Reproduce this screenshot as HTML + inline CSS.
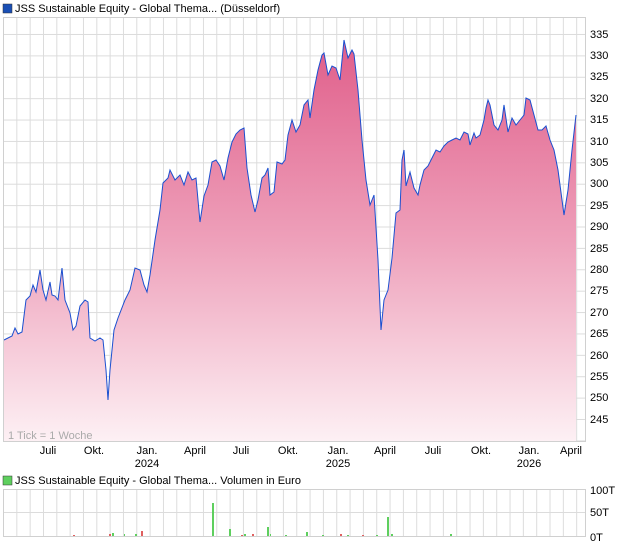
<!DOCTYPE html>
<html><head><meta charset="utf-8"><style>
body{margin:0;background:#fff;font-family:"Liberation Sans",sans-serif;}
svg text{font-family:"Liberation Sans",sans-serif;font-size:11px;fill:#000;}
</style></head><body>
<svg width="620" height="546" xmlns="http://www.w3.org/2000/svg">
<defs>
<linearGradient id="g" gradientUnits="userSpaceOnUse" x1="0" y1="40" x2="0" y2="441">
<stop offset="0" stop-color="#e05e8a"/><stop offset="0.5" stop-color="#eea0ba"/><stop offset="1" stop-color="#fdf0f4"/>
</linearGradient>
<pattern id="vg" x="3" y="0" width="13.33" height="600" patternUnits="userSpaceOnUse"><line x1="0.5" y1="0" x2="0.5" y2="600" stroke="#dcdcdc" stroke-width="1"/></pattern>
<pattern id="hg" x="0" y="12.6" width="600" height="21.39" patternUnits="userSpaceOnUse"><line x1="0" y1="0.5" x2="600" y2="0.5" stroke="#dcdcdc"/></pattern>
</defs>
<rect x="3" y="4" width="9" height="9" fill="#1a4fb5" stroke="#333" stroke-width="0.5"/>
<text x="15" y="12">JSS Sustainable Equity - Global Thema... (Düsseldorf)</text>
<rect x="3" y="17" width="582" height="424" fill="url(#vg)"/>
<rect x="3" y="17" width="582" height="424" fill="url(#hg)"/>
<path d="M4,340 L12,336 L15,328 L18,334 L22,332 L26,300 L30,296 L33,285 L36,292 L40,270 L43,290 L46,300 L50,282 L52,295 L55,296 L58,300 L62,268 L65,300 L70,313 L73,330 L76,326 L80,306 L85,300 L88,302 L90,338 L95,341 L100,338 L103,340 L106,370 L108,400 L110,370 L114,330 L118,318 L125,300 L130,290 L135,268 L140,270 L144,285 L147,292 L150,275 L155,240 L160,210 L163,183 L168,178 L170,170 L175,180 L180,175 L184,185 L188,172 L192,180 L196,178 L200,222 L204,196 L208,185 L212,162 L216,160 L220,166 L224,180 L228,158 L232,142 L236,134 L240,130 L244,128 L247,168 L251,195 L255,212 L258,200 L262,178 L265,175 L268,168 L270,195 L274,192 L277,162 L282,164 L285,160 L288,135 L292,120 L296,132 L300,125 L304,105 L308,100 L310,118 L314,90 L318,70 L322,55 L324,53 L328,75 L332,66 L336,68 L340,80 L344,40 L348,58 L352,50 L354,54 L358,90 L362,140 L366,180 L370,205 L374,195 L378,260 L381,330 L384,300 L388,290 L392,258 L396,213 L400,210 L402,160 L404,150 L406,186 L410,172 L414,188 L418,195 L420,185 L424,170 L428,166 L432,158 L436,150 L440,152 L444,146 L448,142 L452,140 L456,138 L460,140 L464,132 L468,134 L470,145 L474,133 L476,138 L480,135 L484,120 L486,108 L488,100 L490,105 L494,125 L498,130 L502,120 L504,105 L508,132 L512,118 L516,125 L520,120 L524,115 L526,98 L530,100 L534,115 L538,130 L542,130 L546,126 L550,140 L554,150 L558,170 L562,200 L564,215 L568,190 L572,150 L576,115 L576,441 L4,441 Z" fill="url(#g)"/>
<path d="M4,340 L12,336 L15,328 L18,334 L22,332 L26,300 L30,296 L33,285 L36,292 L40,270 L43,290 L46,300 L50,282 L52,295 L55,296 L58,300 L62,268 L65,300 L70,313 L73,330 L76,326 L80,306 L85,300 L88,302 L90,338 L95,341 L100,338 L103,340 L106,370 L108,400 L110,370 L114,330 L118,318 L125,300 L130,290 L135,268 L140,270 L144,285 L147,292 L150,275 L155,240 L160,210 L163,183 L168,178 L170,170 L175,180 L180,175 L184,185 L188,172 L192,180 L196,178 L200,222 L204,196 L208,185 L212,162 L216,160 L220,166 L224,180 L228,158 L232,142 L236,134 L240,130 L244,128 L247,168 L251,195 L255,212 L258,200 L262,178 L265,175 L268,168 L270,195 L274,192 L277,162 L282,164 L285,160 L288,135 L292,120 L296,132 L300,125 L304,105 L308,100 L310,118 L314,90 L318,70 L322,55 L324,53 L328,75 L332,66 L336,68 L340,80 L344,40 L348,58 L352,50 L354,54 L358,90 L362,140 L366,180 L370,205 L374,195 L378,260 L381,330 L384,300 L388,290 L392,258 L396,213 L400,210 L402,160 L404,150 L406,186 L410,172 L414,188 L418,195 L420,185 L424,170 L428,166 L432,158 L436,150 L440,152 L444,146 L448,142 L452,140 L456,138 L460,140 L464,132 L468,134 L470,145 L474,133 L476,138 L480,135 L484,120 L486,108 L488,100 L490,105 L494,125 L498,130 L502,120 L504,105 L508,132 L512,118 L516,125 L520,120 L524,115 L526,98 L530,100 L534,115 L538,130 L542,130 L546,126 L550,140 L554,150 L558,170 L562,200 L564,215 L568,190 L572,150 L576,115" fill="none" stroke="#1a4fd0" stroke-width="1"/>
<rect x="3.5" y="17.5" width="582" height="424" fill="none" stroke="#d0d0d0"/>
<text x="8" y="439" style="fill:#aaa">1 Tick = 1 Woche</text>
<g>
<text x="590" y="38">335</text><text x="590" y="59">330</text><text x="590" y="80">325</text><text x="590" y="102">320</text><text x="590" y="123">315</text><text x="590" y="145">310</text><text x="590" y="166">305</text><text x="590" y="187">300</text><text x="590" y="209">295</text><text x="590" y="230">290</text><text x="590" y="252">285</text><text x="590" y="273">280</text><text x="590" y="294">275</text><text x="590" y="316">270</text><text x="590" y="337">265</text><text x="590" y="359">260</text><text x="590" y="380">255</text><text x="590" y="401">250</text><text x="590" y="423">245</text>
</g>
<g text-anchor="middle">
<text x="48" y="454">Juli</text><text x="94" y="454">Okt.</text><text x="147" y="454">Jan.</text><text x="195" y="454">April</text><text x="241" y="454">Juli</text><text x="288" y="454">Okt.</text><text x="338" y="454">Jan.</text><text x="385" y="454">April</text><text x="433" y="454">Juli</text><text x="481" y="454">Okt.</text><text x="529" y="454">Jan.</text><text x="571" y="454">April</text>
<text x="147" y="467">2024</text><text x="338" y="467">2025</text><text x="529" y="467">2026</text>
</g>
<rect x="3" y="476" width="9" height="9" fill="#5ecf5e" stroke="#333" stroke-width="0.5"/>
<text x="15" y="484">JSS Sustainable Equity - Global Thema... Volumen in Euro</text>
<rect x="3" y="489" width="582" height="47" fill="url(#vg)"/>
<line x1="3" y1="512.5" x2="585" y2="512.5" stroke="#dcdcdc"/>
<rect x="3.5" y="489.5" width="582" height="47" fill="none" stroke="#d0d0d0"/>
<g fill="#5ecf5e">
<rect x="112" y="533" width="2" height="3"/><rect x="124" y="534" width="1" height="2"/><rect x="135" y="534" width="2" height="2"/><rect x="212" y="503" width="2" height="33"/><rect x="229" y="529" width="2" height="7"/><rect x="244" y="534" width="2" height="2"/><rect x="267" y="527" width="2" height="9"/><rect x="270" y="534" width="1" height="2"/><rect x="285" y="535" width="2" height="1"/><rect x="306" y="532" width="2" height="4"/><rect x="322" y="535" width="2" height="1"/><rect x="347" y="535" width="2" height="1"/><rect x="376" y="535" width="2" height="1"/><rect x="387" y="517" width="2" height="19"/><rect x="391" y="534" width="2" height="2"/><rect x="450" y="534" width="2" height="2"/>
</g>
<g fill="#e06060">
<rect x="73" y="535" width="2" height="1"/><rect x="109" y="534" width="2" height="2"/><rect x="141" y="531" width="2" height="5"/><rect x="241" y="535" width="2" height="1"/><rect x="252" y="534" width="2" height="2"/><rect x="340" y="534" width="2" height="2"/><rect x="362" y="535" width="2" height="1"/>
</g>
<text x="590" y="494">100T</text><text x="590" y="516">50T</text><text x="590" y="541">0T</text>
</svg>
</body></html>
